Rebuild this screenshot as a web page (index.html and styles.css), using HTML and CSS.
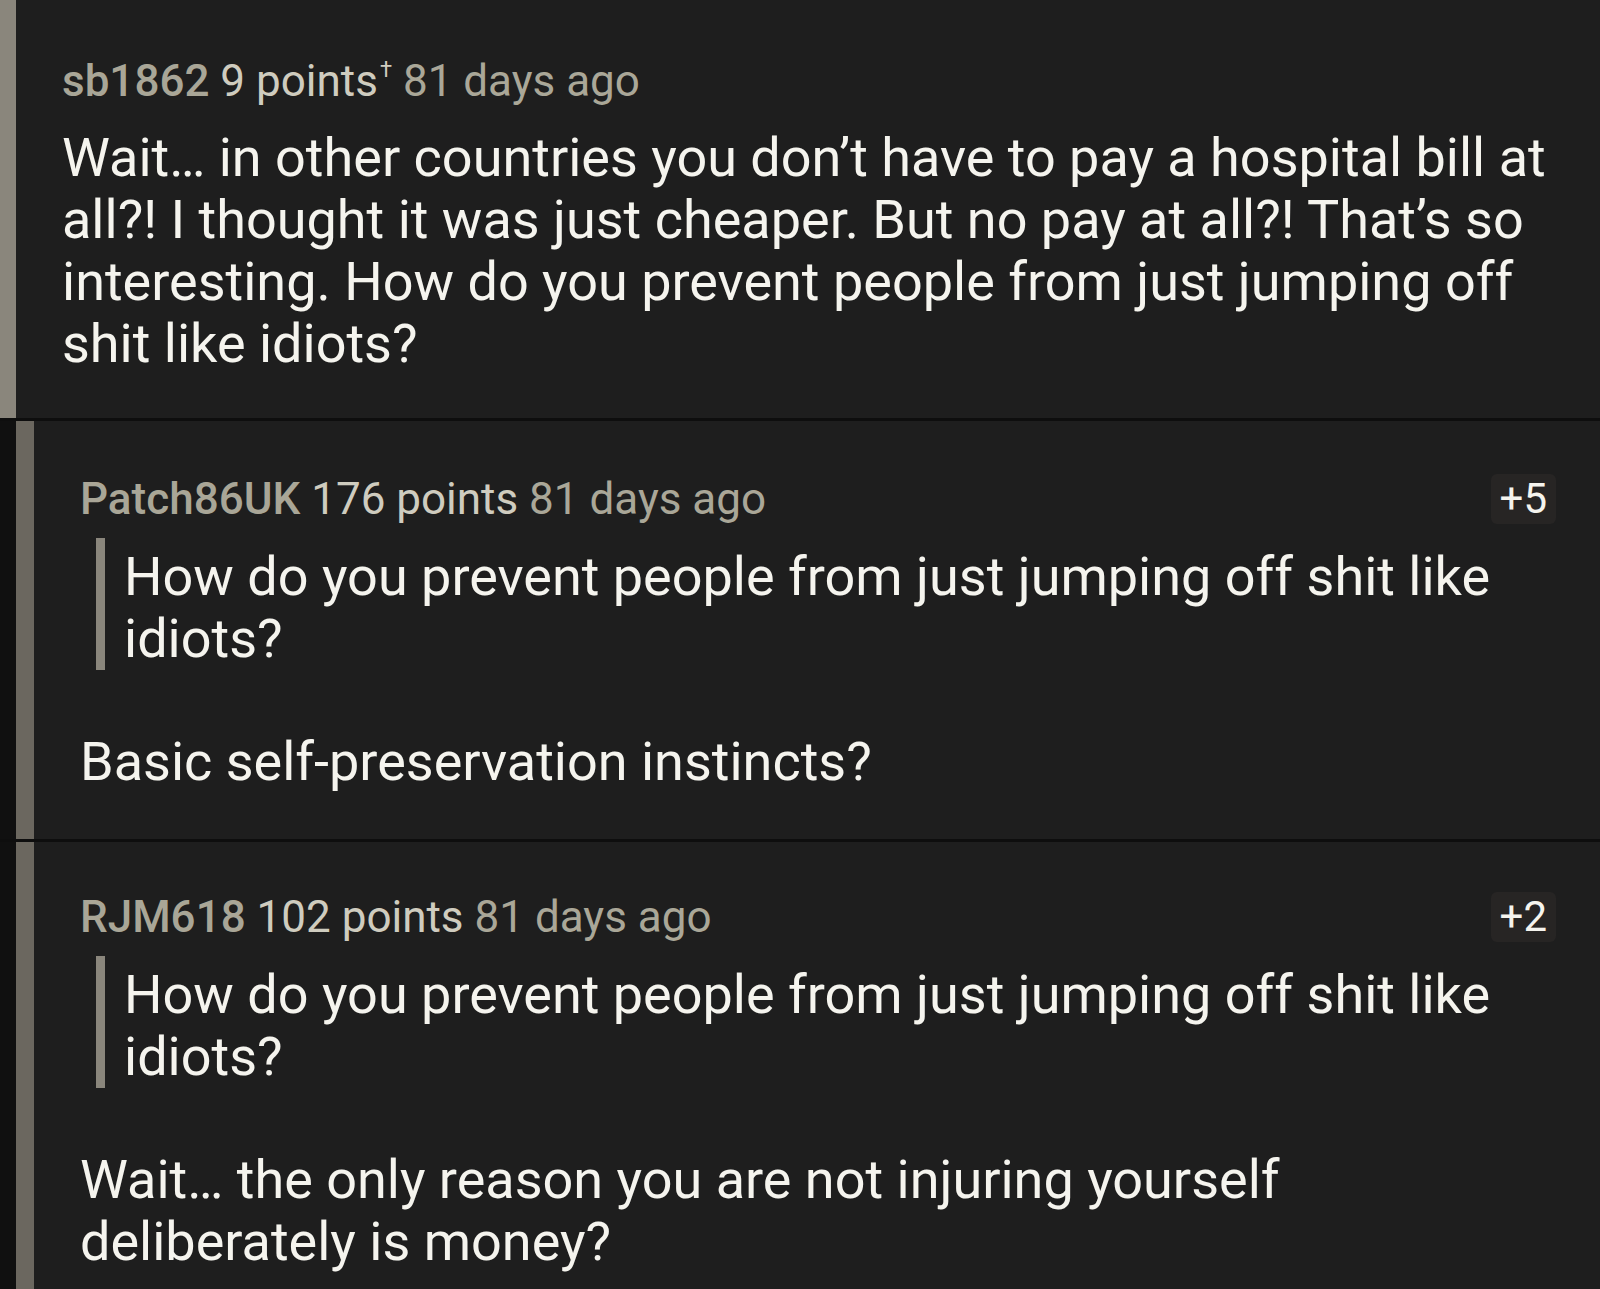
FILE: index.html
```html
<!DOCTYPE html>
<html lang="en">
<head>
<meta charset="utf-8">
<title>Comments</title>
<link rel="stylesheet" href="styles.css">
</head>
<body>
<div class="thread">
  <article class="comment top">
    <div class="bar"></div>
    <div class="content">
      <div class="meta">
        <span class="meta-line"><span class="user">sb1862</span> <span class="points">9 points<sup class="dagger">†</sup></span> <span class="age">81 days ago</span></span>
      </div>
      <p class="text">Wait… in other countries you don’t have to pay a hospital bill at all?! I thought it was just cheaper. But no pay at all?! That’s so interesting. How do you prevent people from just jumping off shit like idiots?</p>
    </div>
  </article>

  <article class="comment reply">
    <div class="indent"></div>
    <div class="bar"></div>
    <div class="content">
      <div class="meta">
        <span class="meta-line"><span class="user">Patch86UK</span> <span class="points">176 points</span> <span class="age">81 days ago</span></span>
        <span class="badge">+5</span>
      </div>
      <blockquote class="quote">How do you prevent people from just jumping off shit like idiots?</blockquote>
      <p class="text after-quote">Basic self-preservation instincts?</p>
    </div>
  </article>

  <article class="comment reply last">
    <div class="indent"></div>
    <div class="bar"></div>
    <div class="content">
      <div class="meta">
        <span class="meta-line"><span class="user">RJM618</span> <span class="points">102 points</span> <span class="age">81 days ago</span></span>
        <span class="badge">+2</span>
      </div>
      <blockquote class="quote">How do you prevent people from just jumping off shit like idiots?</blockquote>
      <p class="text after-quote">Wait… the only reason you are not injuring yourself deliberately is money?</p>
    </div>
  </article>
</div>
</body>
</html>
```

FILE: styles.css
```css
* { box-sizing: border-box; }
html, body {
  margin: 0;
  padding: 0;
  background: #1e1e1e;
  height: 100%;
  overflow: hidden;
}
body {
  font-family: Roboto, "Noto Sans", "Liberation Sans", sans-serif;
  color: #f5f4ee;
}
.thread {
  display: flex;
  flex-direction: column;
  background: #0e0e0e;
  gap: 3px;
}
.comment {
  display: flex;
  background: #1e1e1e;
}
.comment .bar {
  width: 16px;
  flex: none;
  background: #8a867c;
}
.comment.reply .indent {
  width: 16px;
  flex: none;
  background: #101010;
}
.comment.reply .bar {
  width: 18px;
  background: #6b675f;
}
.content {
  flex: 1;
  padding: 60px 44px 43px 46px;
}
.comment.reply .content {
  padding-top: 53px;
  padding-bottom: 46px;
}
.comment.reply.last .content {
  padding-top: 50px;
}
.meta {
  display: flex;
  justify-content: space-between;
  align-items: center;
  height: 50px;
  font-size: 44px;
  line-height: 50px;
  color: #a9a697;
}
.user { font-weight: 500; color: #a9a697; }
.points { color: #cfccbf; }
.dagger { font-size: 22px; vertical-align: 0; position: relative; top: -19px; margin-left: 2px; }
.age { color: #aaa798; }
.badge {
  background: #272524;
  border-radius: 6px;
  color: #f5f4ee;
  font-size: 42px;
  line-height: 50px;
  padding: 0 9px;
}
.comment.top .text { margin-top: 17px; }
.text {
  margin: 20px 0 0 0;
  font-size: 54px;
  line-height: 62px;
}
.quote {
  margin: 14px 0 0 16px;
  padding: 8px 0 0 19px;
  border-left: 9px solid #8a867c;
  font-size: 54px;
  line-height: 62px;
}
.text.after-quote { margin-top: 61px; }
```
